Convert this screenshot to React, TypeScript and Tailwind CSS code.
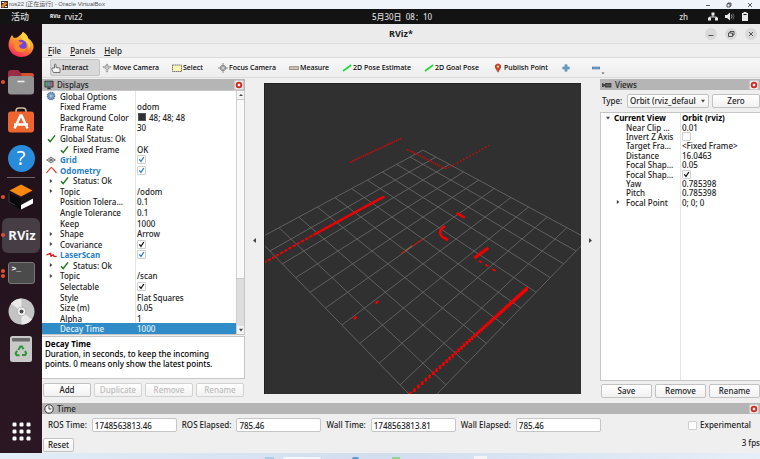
import type { ReactNode } from "react";
import clsx from "clsx";

type Point = [number, number];

interface PropertyRow {
  name: string;
  value?: string;
  checked?: boolean;
  swatch?: boolean;
  icon?: "gear" | "check" | "grid" | "odom" | "scan" | "arrow" | "open";
  status?: boolean;
  display?: boolean;
  selected?: boolean;
}

const displayRows: PropertyRow[] = [
  { name: "Global Options", icon: "gear" },
  { name: "Fixed Frame", value: "odom" },
  { name: "Background Color", value: "48; 48; 48", swatch: true },
  { name: "Frame Rate", value: "30" },
  { name: "Global Status: Ok", icon: "check" },
  { name: "Fixed Frame", value: "OK", status: true },
  { name: "Grid", checked: true, icon: "grid", display: true },
  { name: "Odometry", checked: true, icon: "odom", display: true },
  { name: "Status: Ok", icon: "arrow", status: true },
  { name: "Topic", value: "/odom", icon: "arrow" },
  { name: "Position Tolera…", value: "0.1" },
  { name: "Angle Tolerance", value: "0.1" },
  { name: "Keep", value: "1000" },
  { name: "Shape", value: "Arrow", icon: "arrow" },
  { name: "Covariance", checked: true, icon: "arrow" },
  { name: "LaserScan", checked: true, icon: "scan", display: true },
  { name: "Status: Ok", icon: "arrow", status: true },
  { name: "Topic", value: "/scan", icon: "arrow" },
  { name: "Selectable", checked: true },
  { name: "Style", value: "Flat Squares" },
  { name: "Size (m)", value: "0.05" },
  { name: "Alpha", value: "1" },
  { name: "Decay Time", value: "1000", selected: true },
];

const viewRows: PropertyRow[] = [
  { name: "Near Clip …", value: "0.01" },
  { name: "Invert Z Axis", checked: false },
  { name: "Target Fra…", value: "<Fixed Frame>" },
  { name: "Distance", value: "16.0463" },
  { name: "Focal Shap…", value: "0.05" },
  { name: "Focal Shap…", checked: true },
  { name: "Yaw", value: "0.785398" },
  { name: "Pitch", value: "0.785398" },
  { name: "Focal Point", value: "0; 0; 0", icon: "arrow" },
];

function RowIcon({ icon }: { icon: PropertyRow["icon"] }) {
  switch (icon) {
    case "gear":
      return (
        <svg className="size-[10px]" viewBox="0 0 10 10">
          <circle cx="5" cy="5" r="3.7" fill="#7b9cc0" stroke="#54779d" strokeWidth="1.2" strokeDasharray="1.3 .7" />
          <circle cx="5" cy="5" r="2" fill="#a9c0da" stroke="#5c80a8" strokeWidth=".6" />
        </svg>
      );
    case "check":
      return (
        <svg className="size-[9px]" viewBox="0 0 9 9">
          <path d="M1 5.2 3.2 7.6 8 1.4" fill="none" stroke="#1c7a1c" strokeWidth="1.5" />
        </svg>
      );
    case "grid":
      return (
        <svg className="h-[8px] w-[10px]" viewBox="0 0 10 8">
          <path d="M5 1 9.3 4 5 7 .7 4ZM2.8 2.5 7.2 5.5M7.2 2.5 2.8 5.5M5 1v6M.7 4h8.6" fill="none" stroke="#666" strokeWidth=".8" />
        </svg>
      );
    case "odom":
      return (
        <svg className="h-[8px] w-[11px]" viewBox="0 0 11 8">
          <path d="M.5 7 4 2.6 5.4 1.6 6.8 2.6 10.5 7" fill="none" stroke="#e0432c" strokeWidth="1.2" />
        </svg>
      );
    case "scan":
      return (
        <svg className="h-[8px] w-[11px]" viewBox="0 0 11 8">
          <path d="M.5 3.8 2.5 3.2 4.6 2.4 5 5.2 7.2 4 8.2 5.6 10.7 5.4" fill="none" stroke="#dc1414" strokeWidth="1.4" />
        </svg>
      );
    case "arrow":
      return (
        <svg className="size-[4px]" viewBox="0 0 4 4">
          <path d="M.8 0 3.4 2 .8 4Z" fill="#444" />
        </svg>
      );
    case "open":
      return (
        <svg className="size-[4px]" viewBox="0 0 4 4">
          <path d="M0 .8h4L2 3.4Z" fill="#444" />
        </svg>
      );
    default:
      return null;
  }
}

function CheckBox({ id, label, checked, blue }: { id?: string; label?: string; checked: boolean; blue?: boolean }) {
  return (
    <span className="grid size-[9px] shrink-0">
      <input
        id={id}
        type="checkbox"
        aria-label={label}
        defaultChecked={checked}
        className="peer col-start-1 row-start-1 size-[9px] appearance-none rounded-[1px] border border-[#cfcfcf] bg-white"
      />
      <svg
        className="pointer-events-none invisible col-start-1 row-start-1 size-[9px] peer-checked:visible"
        viewBox="0 0 9 9"
      >
        <path d="M2.3 4.4 4 6.5 6.8 2" fill="none" stroke={blue ? "#2a7fc4" : "#111"} strokeWidth="1.3" />
      </svg>
    </span>
  );
}

function RowValue({ row }: { row: PropertyRow }) {
  return (
    <div className="flex min-w-0 flex-1 items-center gap-[2px] pl-px whitespace-nowrap">
      {row.swatch && <span className="mx-px size-[8px] border border-[#555] bg-[#303030]" />}
      {row.checked !== undefined && <CheckBox label={row.name} checked={row.checked} blue={row.display} />}
      {row.value}
    </div>
  );
}

function DisplayRow({ row }: { row: PropertyRow }) {
  return (
    <div
      className={clsx(
        "flex min-h-0 items-center leading-[9px]",
        row.selected && "bg-[#308cc6] text-[#e8f2fa]"
      )}
    >
      <div
        className={clsx(
          "flex w-[94px] shrink-0 items-center self-stretch border-r whitespace-nowrap",
          row.selected ? "border-[#308cc6]" : "border-[#e4e4e4]"
        )}
      >
        <span className="flex w-[18px] shrink-0 items-center justify-center">
          <RowIcon icon={row.icon} />
        </span>
        {row.status && (
          <span className="w-[13px] shrink-0">
            <RowIcon icon="check" />
          </span>
        )}
        <span className={clsx(row.display && "font-bold text-[#2980c4]")}>{row.name}</span>
      </div>
      <RowValue row={row} />
    </div>
  );
}

function PanelHeader({ title, icon }: { title: string; icon: ReactNode }) {
  return (
    <div className="flex h-[11px] shrink-0 items-center gap-[3px] bg-[#b5b5b5] pl-[2px]">
      {icon}
      <h2 className="flex-1">{title}</h2>
      <button
        aria-label={`Close ${title}`}
        className="mr-px flex size-[10px] items-center justify-center rounded-[2px] border border-[#ccc] bg-[#eee]"
      >
        <svg className="size-[8px]" viewBox="0 0 8 8">
          <circle cx="4" cy="4" r="3.3" fill="#cf2a20" />
          <path d="m2.9 2.9 2.2 2.2m0-2.2L2.9 5.1" stroke="#fff" strokeWidth="1.1" />
        </svg>
      </button>
    </div>
  );
}

function PanelButton({ children, disabled }: { children: ReactNode; disabled?: boolean }) {
  return (
    <button
      disabled={disabled}
      className="h-[14px] min-w-0 flex-1 rounded-[2px] border border-[#c2c2c2] bg-linear-to-b from-white to-[#f1f1f1] leading-[12px] disabled:border-[#d2d2d2] disabled:text-[#bcbcbc]"
    >
      {children}
    </button>
  );
}

function DisplaysPanel() {
  return (
    <aside className="flex w-[203px] shrink-0 flex-col pt-px">
      <PanelHeader
        title="Displays"
        icon={
          <svg className="size-[10px]" viewBox="0 0 10 10">
            <rect x=".5" y=".8" width="9" height="6.6" rx=".6" fill="#333" />
            <path d="M1.4 1.6h2.4v5H1.4z" fill="#58a66b" />
            <path d="M3.8 1.6h2.4v5H3.8z" fill="#5d87b5" />
            <path d="M6.2 1.6h2.4v5H6.2z" fill="#b86464" />
            <path d="M3 9.2h4L6.2 7.4H3.8z" fill="#333" />
          </svg>
        }
      />
      <div className="flex border border-l-0 border-[#c6c6c6] bg-white">
        <div className="grid h-[243px] min-w-0 flex-1 auto-rows-fr">
          {displayRows.map((row, i) => (
            <DisplayRow key={i} row={row} />
          ))}
        </div>
        <div className="flex w-[8px] flex-col border-l border-[#d0d0d0] bg-[#dedede]">
          <div className="flex h-[8px] items-center justify-center bg-[#f4f4f4]">
            <svg className="size-[4px]" viewBox="0 0 4 4">
              <path d="M0 3h4L2 1Z" fill="#444" />
            </svg>
          </div>
          <div className="h-[180px] border-y border-[#c8c8c8] bg-[#fafafa]" />
          <div className="mt-auto flex h-[8px] items-center justify-center bg-[#f4f4f4]">
            <RowIcon icon="open" />
          </div>
        </div>
      </div>
      <div className="mt-px h-[43px] border border-l-0 border-[#c6c6c6] bg-white pt-[2px] pl-[3px] leading-[10px] whitespace-nowrap text-black">
        <p className="font-bold">Decay Time</p>
        <p>Duration, in seconds, to keep the incoming</p>
        <p>points. 0 means only show the latest points.</p>
      </div>
      <div className="mt-[4px] flex gap-[3px] px-px">
        <PanelButton>Add</PanelButton>
        <PanelButton disabled>Duplicate</PanelButton>
        <PanelButton disabled>Remove</PanelButton>
        <PanelButton disabled>Rename</PanelButton>
      </div>
    </aside>
  );
}

function ViewsPanel() {
  return (
    <aside className="flex w-[160px] shrink-0 flex-col pt-px">
      <PanelHeader
        title="Views"
        icon={
          <svg className="h-[8px] w-[10px]" viewBox="0 0 10 8">
            <path d="M0 2 3 3.2V2h6.4v4.4H3V5.2L0 6.2Z" fill="#444" />
            <path d="M4 4.2h4.4" stroke="#888" strokeWidth=".8" />
          </svg>
        }
      />
      <div className="flex items-center gap-[3px] py-[4px] pl-[2px]">
        <label htmlFor="view-type" className="w-[22px]">
          Type:
        </label>
        <div className="grid w-[82px] items-center">
          <select
            id="view-type"
            className="col-start-1 row-start-1 h-[14px] w-full appearance-none rounded-[2px] border border-[#c2c2c2] bg-linear-to-b from-white to-[#f1f1f1] pr-[12px] pl-[2px] leading-[12px]"
          >
            <option>Orbit (rviz_default_plugins)</option>
          </select>
          <span className="pointer-events-none col-start-1 row-start-1 mr-[4px] justify-self-end">
            <RowIcon icon="open" />
          </span>
        </div>
        <PanelButton>Zero</PanelButton>
      </div>
      <div className="flex flex-1 flex-col border border-r-0 border-[#c6c6c6] bg-white">
        <div className="grid h-[94px] auto-rows-fr pr-px">
          <div className="flex min-h-0 items-center leading-[9px] font-bold whitespace-nowrap text-black">
            <div className="flex w-[80px] shrink-0 items-center self-stretch border-r border-[#e4e4e4]">
              <span className="flex w-[13px] shrink-0 justify-center">
                <RowIcon icon="open" />
              </span>
              Current View
            </div>
            <span className="pl-px">Orbit (rviz)</span>
          </div>
          {viewRows.map((row, i) => (
            <div key={i} className="flex min-h-0 items-center leading-[9px]">
              <div className="flex w-[80px] shrink-0 items-center self-stretch border-r border-[#e4e4e4] pl-[9px] whitespace-nowrap">
                <span className="flex w-[16px] shrink-0 justify-center">
                  <RowIcon icon={row.icon} />
                </span>
                {row.name}
              </div>
              <RowValue row={row} />
            </div>
          ))}
        </div>
        <div className="w-[80px] flex-1 border-r border-[#e4e4e4]" />
      </div>
      <div className="mt-[3px] mb-[5px] flex gap-[3px] pl-px">
        <PanelButton>Save</PanelButton>
        <PanelButton>Remove</PanelButton>
        <PanelButton>Rename</PanelButton>
      </div>
    </aside>
  );
}

// orbit camera: 45deg pitch and yaw, 45deg vertical fov
const DISTANCE = 16.0463;
const FOCAL = 375.4;

function project(x: number, y: number): Point {
  const side = (x - y) * Math.SQRT1_2;
  const ahead = (x + y) / 2;
  const depth = DISTANCE + ahead;
  return [423 + (side * FOCAL) / depth, 238.5 - (ahead * FOCAL) / depth];
}

const gridPath = Array.from({ length: 11 }, (_, i) => i - 5)
  .map((n) => {
    const line = (a: Point, b: Point) => `M${a.join(" ")}L${b.join(" ")}`;
    return line(project(n, -5), project(n, 5)) + line(project(-5, n), project(5, n));
  })
  .join("");

// the near wall: samples spread out towards the camera
const nearWall: Point[] = [];
for (let d = 0; d < 158; d += 1.6 + (d / 158) * 4) {
  nearWall.push([527 - d * 0.741, 288.5 + d * 0.668]);
}

function Viewport() {
  return (
    <svg
      className="min-h-0 w-full flex-1 border-t border-l border-[#222] bg-[#303030]"
      viewBox="264 83 318 311"
      preserveAspectRatio="xMidYMid slice"
      role="img"
      aria-label="3D view"
    >
      <path d={gridPath} fill="none" stroke="#666" strokeWidth=".9" />
      <g fill="none" stroke="#f00000">
        <path d="M350 161.5 401 137.5" strokeWidth="1.5" strokeDasharray="1.6 .7" stroke="#d00808" />
        <path d="M407 148.5 445.5 168" strokeWidth="1.4" strokeDasharray="1.6 .8" stroke="#d00808" />
        <path d="M445.5 168 455 163.5" strokeWidth="1.4" strokeDasharray="1.4 1.2" stroke="#d00808" />
        <path d="M457 162.5 489.5 144.5" strokeWidth="1.5" strokeDasharray="1.5 2.1" stroke="#d80808" />
        <path d="M384.5 196 380 198 313 234.5" strokeWidth="2.4" />
        <path d="M312 235 264 262" strokeWidth="2" strokeDasharray="3.4 1.4" />
        <path d="M456.5 212.5 465 217" strokeWidth="2.6" />
        <path d="M445 225.5C440 228 438.5 233 442.5 236.5L448 239.5" strokeWidth="2.6" />
        <path d="M488.5 247.5 474.5 257.5" strokeWidth="3" />
        <path d="m479 260.5 3 1.5m3.5 2.2 3 1.5m4 3 3.5 1.7" strokeWidth="1.8" />
        <path d="M353.7 319l2.6-2.8M375.4 303.5l2.6-2.8" strokeWidth="2.4" />
        <path d="M423 238.5 401 253" strokeWidth="1.1" stroke="#b81a12" />
        <path d="m405 250.5 7-5" strokeWidth="1.4" stroke="#7d6b45" />
      </g>
      {nearWall.map(([x, y], i) => (
        <rect key={i} x={x - 1.2} y={y - 1.8} width="2.5" height="3.7" fill="#f40000" />
      ))}
    </svg>
  );
}

function SplitterArrow({ side }: { side: "left" | "right" }) {
  return (
    <button aria-label={`Hide ${side} dock`} className="flex w-[19px] shrink-0 items-center justify-center">
      <svg className="size-[5px]" viewBox="0 0 5 5">
        <path d={side === "left" ? "M4 0v5L1 2.5Z" : "M1 0v5l3-2.5Z"} fill="#444" />
      </svg>
    </button>
  );
}

const tools: { name: string; icon: ReactNode }[] = [
  {
    name: "Interact",
    icon: <path d="M1 5h2.5V1.5q.8-.8 1.5 0V4.5l4 .5v4.5H2.5L1 7Z" fill="#f4f4f4" stroke="#555" strokeWidth=".8" />,
  },
  {
    name: "Move Camera",
    icon: (
      <>
        <path d="M5 .5 6.8 2.5H3.2ZM5 9.5 3.2 7.5h3.6ZM.3 4 2.5 2.5v3ZM9.7 4 7.5 2.5v3Z" fill="#999" />
        <circle cx="5" cy="4.5" r="2" fill="#ccc" stroke="#888" strokeWidth=".7" />
      </>
    ),
  },
  { name: "Select", icon: <path d="M.5 2h9v6.5h-9Z" fill="#fbf6b4" stroke="#666" strokeWidth=".9" strokeDasharray="1.5 .5" /> },
  {
    name: "Focus Camera",
    icon: (
      <>
        <circle cx="5" cy="5" r="2.7" fill="#ccc" stroke="#888" strokeWidth="1" />
        <path d="M5 0v4M5 6v4M0 5h4M6 5h4" stroke="#888" strokeWidth="1" />
      </>
    ),
  },
  { name: "Measure", icon: <path d="M.4 3.7h9.2v2.8H.4Z" fill="#d9c3ac" stroke="#777" strokeWidth=".8" /> },
  { name: "2D Pose Estimate", icon: <path d="M1 8 9.2 2" stroke="#1ddc35" strokeWidth="1.6" /> },
  { name: "2D Goal Pose", icon: <path d="M1 8 9.2 2" stroke="#1ddc35" strokeWidth="1.6" /> },
  {
    name: "Publish Point",
    icon: (
      <>
        <path d="M5 9.7 2.3 5.2a3.1 3.1 0 1 1 5.4 0Z" fill="#c5442a" />
        <circle cx="5" cy="3.6" r="1.2" fill="#f6c9a8" />
      </>
    ),
  },
];

function Toolbar() {
  return (
    <div className="flex h-[21px] items-center border-y border-[#dadada] bg-linear-to-b from-[#f8f8f8] to-[#ededed] pl-[8px]">
      <div className="grid grid-cols-[51px_70px_46px_71px_53px_82px_69px_70px_19px_24px] items-center text-[7px] text-black">
        {tools.map((tool, i) => (
          <button
            key={tool.name}
            className={clsx(
              "mr-px flex h-[17px] items-center gap-px rounded-[2px] border whitespace-nowrap",
              i === 0 ? "border-[#c4c4c4] bg-[#d9d9d9]" : "border-transparent"
            )}
          >
            <svg className="size-[10px] shrink-0" viewBox="0 0 10 10">
              {tool.icon}
            </svg>
            {tool.name}
          </button>
        ))}
        <button aria-label="Add tool">
          <svg className="size-[8px]" viewBox="0 0 8 8">
            <path d="M4 .5v7M.5 4h7" stroke="#4579ad" strokeWidth="2.6" />
            <path d="M4 1v6M1 4h6" stroke="#7ba7d2" strokeWidth="1.2" />
          </svg>
        </button>
        <button aria-label="Remove tool" className="flex items-center justify-end">
          <svg className="size-[14px]" viewBox="0 0 14 14">
            <path d="M1 7h8" stroke="#4579ad" strokeWidth="2.6" />
            <path d="M1.6 7h6.8" stroke="#7ba7d2" strokeWidth="1.2" />
            <path d="M10.5 11.5h3L12 13.3Z" fill="#555" />
          </svg>
        </button>
      </div>
    </div>
  );
}

function TimeField({ label, value }: { label: string; value: string }) {
  return (
    <label className="flex items-center gap-[5px] whitespace-nowrap">
      {label}
      <input
        readOnly
        defaultValue={value}
        className="h-[14px] w-[85px] rounded-[2px] border border-[#c6c6c6] bg-white px-[2px]"
      />
    </label>
  );
}

function TimePanel() {
  return (
    <section className="flex h-[50px] shrink-0 flex-col">
      <PanelHeader
        title="Time"
        icon={
          <svg className="size-[10px]" viewBox="0 0 10 10">
            <circle cx="5" cy="5" r="4.2" fill="#f2f2f2" stroke="#333" strokeWidth="1" />
            <path d="M5 2.2V5h2.3" fill="none" stroke="#333" strokeWidth=".9" />
          </svg>
        }
      />
      <div className="mt-[4px] flex items-center gap-[5px] pr-[9px] pl-[6px]">
        <TimeField label="ROS Time:" value="1748563813.46" />
        <TimeField label="ROS Elapsed:" value="785.46" />
        <TimeField label="Wall Time:" value="1748563813.81" />
        <TimeField label="Wall Elapsed:" value="785.46" />
        <div className="ml-auto flex items-center gap-[3px]">
          <CheckBox id="experimental" checked={false} />
          <label htmlFor="experimental">Experimental</label>
        </div>
      </div>
      <div className="mt-[6px] flex items-center justify-between pl-px">
        <div className="flex w-[31px]">
          <PanelButton>Reset</PanelButton>
        </div>
        <span className="pb-[4px]">3 fps</span>
      </div>
    </section>
  );
}

function DockItem({ name, dots = 0, active, children }: { name: string; dots?: number; active?: boolean; children: ReactNode }) {
  return (
    <button aria-label={name} className="flex h-[38px] w-full shrink-0 items-center">
      <span className="z-10 flex w-[2px] flex-col items-end gap-px">
        {Array.from({ length: dots }, (_, i) => (
          <span key={i} className="-mr-[3px] size-[4px] rounded-full bg-[#e2502b]" />
        ))}
      </span>
      <span className={clsx("flex h-[35px] w-[38px] items-center justify-center rounded-[6px]", active && "bg-[#463e44]")}>
        {children}
      </span>
    </button>
  );
}

function Dock() {
  return (
    <nav className="flex w-[42px] shrink-0 flex-col items-center bg-linear-to-b from-[#1b0f17] to-[#2b1723] pt-px">
      <DockItem name="Firefox">
        <svg className="size-[28px]" viewBox="0 0 28 28">
          <defs>
            <linearGradient id="fox" x1=".8" y1="0" x2=".3" y2="1">
              <stop offset="0" stopColor="#ffe14a" />
              <stop offset=".45" stopColor="#ff9a2c" />
              <stop offset="1" stopColor="#f4245f" />
            </linearGradient>
          </defs>
          <path d="M16 2c3 2 4 3 5 6 4 3 6 6 5.5 10C25 24 20 27 14 27S1.500 22 1.500 15C1.500 11 3 8 5 5l2 3 3-.5C12 6 14 5 16 2Z" fill="url(#fox)" />
          <circle cx="14" cy="15.5" r="5.8" fill="#7444dd" />
          <path d="M7 11c2-2 5-1 6 1l3 .5c-1 2-3 2-4 3 1 4 5 4 8 2-2 6-9 6-12 2-1-3-1-6-1-8.5Z" fill="#ff8a2a" />
          <path d="M16 2c3 2 5 4 5 7 3 4 3 8 0 11 2-5-1-9-5-10-3-2-2-5 0-8Z" fill="#ffd342" />
        </svg>
      </DockItem>
      <DockItem name="Files" dots={1}>
        <svg className="size-[28px]" viewBox="0 0 28 28">
          <path d="M1 5q0-3 3-3h7l3 3h10q3 0 3 3v9H1Z" fill="#9a2c48" />
          <path d="M14 5h10q3 0 3 3H15Z" fill="#d6502e" />
          <rect x="1" y="8" width="26" height="18.5" rx="3" fill="#929292" />
          <path d="M10.5 13.5h7" stroke="#eee" strokeWidth="1.6" />
        </svg>
      </DockItem>
      <DockItem name="Ubuntu Software">
        <svg className="size-[28px]" viewBox="0 0 28 28">
          <path d="M9 8V5q0-3 3-3h4q3 0 3 3v3" fill="none" stroke="#c9baa0" strokeWidth="1.6" />
          <rect x="1" y="5.5" width="26" height="21" rx="3" fill="#ee6530" />
          <path d="m7.500 22.500 6-13h1l6 13M7 18.500h14" fill="none" stroke="#fff" strokeWidth="2.5" />
        </svg>
      </DockItem>
      <DockItem name="Help">
        <span className="flex size-[27px] items-center justify-center rounded-full bg-[#288cdb] text-[20px] font-normal text-white">
          ?
        </span>
      </DockItem>
      <hr className="w-[28px] border-[#6b6268]" />
      <DockItem name="Gazebo" dots={1}>
        <svg className="h-[30px] w-[28px]" viewBox="0 0 28 30">
          <path d="M14 2.500 25.500 8.500 14 14.500 2.500 8.500Z" fill="#f7870f" />
          <path d="M2 11 14 17v11L2 21Z" fill="#09080a" />
          <path d="M26 11 14 17v11l12-6Z" fill="#171317" />
          <path d="M14 23 26 16.500v5L14 27.500Z" fill="#fff" />
          <path d="M2 11v9l6 3" fill="none" stroke="#4b454a" strokeWidth=".8" />
        </svg>
      </DockItem>
      <DockItem name="RViz" dots={1} active>
        <span className="pl-[2px] text-[13px] leading-none font-bold text-[#f4f4f4]">RViz</span>
      </DockItem>
      <DockItem name="Terminal" dots={2}>
        <span className="flex h-[22px] w-[27px] rounded-[3px] border border-[#777] bg-[#4b4b4b] pt-px pl-[3px] font-['Liberation_Mono'] text-[8px] leading-[9px] font-bold text-white">
          &gt;_
        </span>
      </DockItem>
      <DockItem name="Disc">
        <svg className="size-[27px]" viewBox="0 0 27 27">
          <circle cx="13.5" cy="13.5" r="13" fill="#c4c4c4" />
          <path d="M13.500 13.500 3 5.500Q7 .7 13.500.5ZM13.500 13.500 24 21.500q-4 5-10.500 5Z" fill="#e9e9e9" />
          <circle cx="13.5" cy="13.5" r="4.3" fill="#f3f3f3" stroke="#999" strokeWidth=".6" />
          <circle cx="13.5" cy="13.5" r="2" fill="#4c4c4c" />
        </svg>
      </DockItem>
      <DockItem name="Trash">
        <svg className="h-[26px] w-[22px]" viewBox="0 0 22 26">
          <rect width="22" height="26" rx="2.5" fill="#c9c9c9" />
          <rect x="2" y="2" width="18" height="3.5" rx="1" fill="#6b6b6b" />
          <g fill="none" stroke="#2d9636" strokeWidth="2">
            <path d="m8.3 14 2-3.500h1.600l1.600 2.700" />
            <path d="m15 15 1.200 2.300-1 1.800H12" />
            <path d="M9.500 19.200H6.600L5.600 17.500l1.500-2.700" />
          </g>
        </svg>
      </DockItem>
      <button aria-label="Show applications" className="mt-auto mb-[12px]">
        <svg className="size-[19px]" viewBox="0 0 19 19" fill="#fff">
          {[2.5, 9.5, 16.5].map((y) =>
            [2.5, 9.5, 16.5].map((x) => <rect key={`${x}-${y}`} x={x - 2} y={y - 2} width="4" height="4" rx="1.2" />)
          )}
        </svg>
      </button>
    </nav>
  );
}

function HostTitleBar() {
  return (
    <header className="flex h-[9px] items-center justify-between bg-[#eff4fa] pl-px font-['Liberation_Sans','Noto_Sans_CJK_SC',sans-serif] text-[6px] leading-[9px] font-normal text-[#555]">
      <div className="flex items-center gap-px">
        <svg className="size-[7px]" viewBox="0 0 7 7">
          <path d="M0 0h7v7H0Z" fill="#3c2b26" />
          <path d="M0 5 4 1 6.500 2 2 7Z" fill="#f0862c" />
          <path d="M1 1h2v1H1ZM4 5h2v1H4Z" fill="#fff" />
        </svg>
        <span>ros22 [正在运行] - Oracle VirtualBox</span>
      </div>
      <svg className="mr-[7px] h-[6px] w-[48px]" viewBox="0 0 48 6" fill="none" stroke="#333" strokeWidth=".8">
        <path d="M1 3.500h4" />
        <path d="M22 1.800h3v3.200h-3ZM23 1.800V1h3v3h-1" />
        <path d="m43 1 4 4m0-4-4 4" />
      </svg>
    </header>
  );
}

function GnomeBar() {
  return (
    <div className="grid h-[15px] grid-cols-[1fr_auto_1fr] items-center bg-[#131313] leading-[15px] text-[#ddd]">
      <div className="flex items-center pl-[11px]">
        <span className="text-[9px]">活动</span>
        <span className="mr-[4px] ml-[21px] text-[5px] font-bold text-white">RViz</span>
        <span>rviz2</span>
      </div>
      <time className="pl-[44px] whitespace-pre">5月30日  08：10</time>
      <div className="flex items-center justify-end pr-[10px]">
        <span className="mr-[20px]">zh</span>
        <svg className="h-[9px] w-[42px]" viewBox="0 0 42 9" fill="#e8e8e8">
          <path d="M3.500.5h3v3h-3ZM0 5.500h3v3H0ZM7 5.500h3v3H7Z" />
          <path d="M5 3v2M1.500 6V5h7v1" fill="none" stroke="#e8e8e8" strokeWidth=".9" />
          <path d="M17 3h2l3-2.500v8L19 6h-2Z" />
          <path d="M23.300 2.500q1.500 2 0 4" fill="none" stroke="#ccc" strokeWidth=".8" />
          <path d="M25 1.500q2 3 0 6" fill="none" stroke="#777" strokeWidth=".8" />
          <path d="M35.500 0h3v1H40v8h-6V1h1.500Z" />
          <path d="M35.500 2.500h3" stroke="#131313" strokeWidth="1" />
        </svg>
      </div>
    </div>
  );
}

function WindowTitle() {
  return (
    <div className="grid h-[20px] grid-cols-[1fr_auto_1fr] items-center border-b border-[#dcdcdc] bg-[#ebebeb]">
      <h1 className="col-start-2 text-[9px] font-bold">RViz*</h1>
      <div className="flex justify-end gap-[8px] pr-[3px]">
        {["M3.500 7.500h5", "M3.500 5h4v3.500h-4ZM5 5V3.500h4V7H7.500", "m4 4 4 4m0-4-4 4"].map((d, i) => (
          <button key={d} aria-label={["Minimize", "Restore", "Close"][i]} className="size-[12px] rounded-full bg-[#d9d9d9]">
            <svg viewBox="0 0 12 12" fill="none" stroke="#444" strokeWidth=".9">
              <path d={d} />
            </svg>
          </button>
        ))}
      </div>
    </div>
  );
}

export default function App() {
  return (
    <div className="flex min-h-screen flex-col overflow-hidden bg-[#efefef] font-['Noto_Sans','Noto_Sans_CJK_SC',sans-serif] text-[8px] leading-[10px] font-medium text-[#222]">
      <HostTitleBar />
      <GnomeBar />
      <div className="flex flex-1">
        <Dock />
        <main className="flex min-w-0 flex-1 flex-col">
          <WindowTitle />
          <nav className="flex h-[13px] items-center gap-[9px] pl-[6px]">
            {["File", "Panels", "Help"].map((item) => (
              <button key={item}>
                <span className="underline">{item[0]}</span>
                {item.slice(1)}
              </button>
            ))}
          </nav>
          <Toolbar />
          <div className="flex flex-1">
            <DisplaysPanel />
            <div className="flex min-w-0 flex-1">
              <SplitterArrow side="left" />
              <div className="flex min-w-0 flex-1 flex-col pt-[5px] pb-[9px]">
                <Viewport />
              </div>
              <SplitterArrow side="right" />
            </div>
            <ViewsPanel />
          </div>
          <TimePanel />
        </main>
      </div>
      <footer className="flex h-[6px] items-end bg-linear-to-r from-[#e3edf7] via-[#d3ddf0] to-[#e6eef7] pl-[265px]">
        <span className="h-[2px] w-[9px] bg-[#a9cfe6]" />
        <span className="ml-[9px] h-[2px] w-[38px] rounded-t bg-[#f3f7fc]" />
        <span className="ml-[31px] h-[2px] w-[7px] rounded-t bg-[#5b9bd0]" />
        <span className="ml-[33px] h-[2px] w-[8px] bg-[#8bd78f]" />
        <span className="ml-[74px] h-[3px] w-[13px] bg-[#f4f4f4]" />
      </footer>
    </div>
  );
}
